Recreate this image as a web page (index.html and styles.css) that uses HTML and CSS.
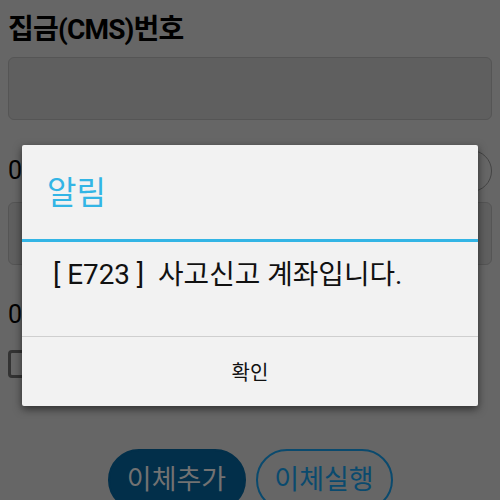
FILE: index.html
```html
<!DOCTYPE html>
<html lang="ko">
<head>
    <meta charset="UTF-8">
    <meta name="viewport" content="width=device-width, initial-scale=1.0">
    <title>집금(CMS)번호</title>
    <link rel="stylesheet" href="styles.css">
</head>
<body>
    <div class="page">
        <h1 class="title">집금(CMS)번호</h1>
        <div class="field"></div>

        <div class="row">
            <span class="amount">0</span>
            <span class="round-btn"></span>
        </div>
        <div class="field field-second"></div>

        <div class="amount amount-second">0</div>
        <div class="check"></div>

        <div class="actions">
            <button class="btn btn-fill">이체추가</button>
            <button class="btn btn-line">이체실행</button>
        </div>
    </div>

    <div class="dialog">
        <div class="dialog-title">알림</div>
        <div class="dialog-body">[ E723 ]&nbsp; 사고신고 계좌입니다.</div>
        <button class="dialog-ok">확인</button>
    </div>
</body>
</html>
```

FILE: styles.css
```css
body {
    margin: 0;
    background-color: #666;
    font-family: Roboto, "Noto Sans CJK KR", sans-serif;
    color: #000;
    overflow: hidden;
}
.page {
    padding: 0 8px;
}
.title {
    margin: 15px 0 0;
    font-size: 28px;
    line-height: 30px;
    font-weight: bold;
    letter-spacing: -0.8px;
}
.field {
    margin-top: 12px;
    height: 61px;
    border: 1px solid #555;
    border-radius: 6px;
    background-color: #5f5f5f;
}
.field-second {
    margin-top: 10px;
}
.row {
    margin-top: 30px;
    height: 42px;
    display: flex;
    align-items: center;
    justify-content: space-between;
}
.amount {
    font-size: 25px;
    line-height: 30px;
    color: #000;
}
.amount-second {
    margin-top: 35px;
}
.round-btn {
    width: 40px;
    height: 40px;
    border: 1px solid #444;
    border-radius: 50%;
}
.check {
    margin-top: 20px;
    width: 22px;
    height: 22px;
    border: 3px solid #333;
    border-radius: 4px;
}
.actions {
    margin-top: 71px;
    display: flex;
    justify-content: center;
    gap: 10px;
}
.btn {
    height: 62px;
    padding: 0 0 6px;
    border-radius: 31px;
    font-family: "Noto Sans CJK KR", sans-serif;
    font-size: 27px;
    line-height: 1;
}
.btn-fill {
    width: 138px;
    border: 2px solid #022f4a;
    background-color: #022f4a;
    color: #727272;
}
.btn-line {
    width: 137px;
    border: 2px solid #0a4a6e;
    background-color: transparent;
    color: #0a4a6e;
}
.dialog {
    position: absolute;
    left: 22px;
    top: 145px;
    width: 456px;
    background-color: #f2f2f2;
    border-radius: 2px;
    box-shadow: 0 3px 8px rgba(0, 0, 0, 0.55);
}
.dialog-title {
    height: 97px;
    box-sizing: border-box;
    padding: 0 0 4px 25px;
    display: flex;
    align-items: center;
    font-size: 32px;
    color: #33b5e5;
    border-bottom: 3px solid #33b5e5;
}
.dialog-body {
    height: 95px;
    box-sizing: border-box;
    padding: 18px 0 0 31px;
    font-size: 27.8px;
    line-height: 30px;
    color: #111;
    border-bottom: 1px solid #cfcfcf;
}
.dialog-ok {
    display: block;
    width: 100%;
    height: 69px;
    border: none;
    background: none;
    font-family: "Noto Sans CJK KR", sans-serif;
    font-size: 20px;
    color: #111;
}
```
